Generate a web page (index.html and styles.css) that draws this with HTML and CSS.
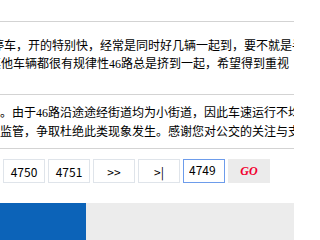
FILE: index.html
```html
<!DOCTYPE html>
<html lang="zh-CN">
<head>
<meta charset="utf-8">
<title>回复</title>
<link rel="stylesheet" href="styles.css">
</head>
<body>
<div class="page">
  <div class="top"></div>
  <div class="replies">
    <div class="reply reply-first">
      <div class="txt txt-shift">
        <div class="ln">停车，开的特别快，经常是同时好几辆一起到，要不就是半天不来</div>
        <div class="ln ln-tight">其他车辆都很有规律性<span class="num">46</span>路总是挤到一起，希望得到重视</div>
      </div>
    </div>
    <div class="reply">
      <div class="txt">
        <div class="ln">。由于<span class="num">46</span>路沿途途经街道均为小街道，因此车速运行不均匀</div>
        <div class="ln">监管，争取杜绝此类现象发生。感谢您对公交的关注与支持</div>
      </div>
    </div>
  </div>
  <div class="pager">
    <a class="pg">4750</a>
    <a class="pg">4751</a>
    <a class="pg">&gt;&gt;</a>
    <a class="pg">&gt;|</a>
    <input class="pg-input" type="text" value="4749">
    <button class="pg-go">GO</button>
  </div>
  <div class="footer">
    <div class="footer-blue"></div>
    <div class="footer-rest"></div>
  </div>
</div>
</body>
</html>
```

FILE: styles.css
```css
html, body {
  margin: 0;
  padding: 0;
  background: #fff;
}
body {
  font-family: "Noto Sans CJK SC", "Liberation Sans", sans-serif;
  font-size: 12px;
  color: #000;
}
.page {
  width: 294px;
  overflow: hidden;
}
.top {
  height: 21px;
}
.replies {
  border-top: 1px solid #d3d3d3;
}
.reply {
  border-bottom: 1px solid #d3d3d3;
  padding: 8px 0;
}
.reply-first {
  padding: 14px 0 21px;
}
.txt {
  line-height: 18px;
}
.txt-shift {
  margin-left: -8px;
}
.ln {
  white-space: nowrap;
}
.ln-tight {
  margin-left: -3px;
}
.num {
  font-family: "Liberation Serif", serif;
  font-size: 12px;
}
.pager {
  display: flex;
  gap: 3px;
  padding: 10px 0 0 3px;
  height: 24px;
}
.pg {
  box-sizing: border-box;
  width: 42px;
  height: 24px;
  border: 1px solid #dfe4ea;
  display: flex;
  align-items: center;
  justify-content: center;
  font-size: 12px;
  color: #000;
  text-decoration: none;
}
.pg-input {
  box-sizing: border-box;
  width: 42px;
  height: 24px;
  margin: 0;
  border: 1px solid #6d9ceb;
  padding: 0 0 3px 5px;
  font-family: "Noto Sans CJK SC", "Liberation Sans", sans-serif;
  font-size: 12px;
  color: #000;
  outline: none;
}
.pg-go {
  box-sizing: border-box;
  width: 42px;
  height: 24px;
  margin: 0;
  border: none;
  background: #ebebeb;
  color: #f2002f;
  font-family: "Liberation Serif", serif;
  font-style: italic;
  font-weight: bold;
  font-size: 12px;
  padding: 0;
}
.footer {
  display: flex;
  margin-top: 20px;
  height: 40px;
}
.footer-blue {
  width: 86px;
  background: #0c63b8;
}
.footer-rest {
  flex: 1;
  background: #ececec;
}
```
